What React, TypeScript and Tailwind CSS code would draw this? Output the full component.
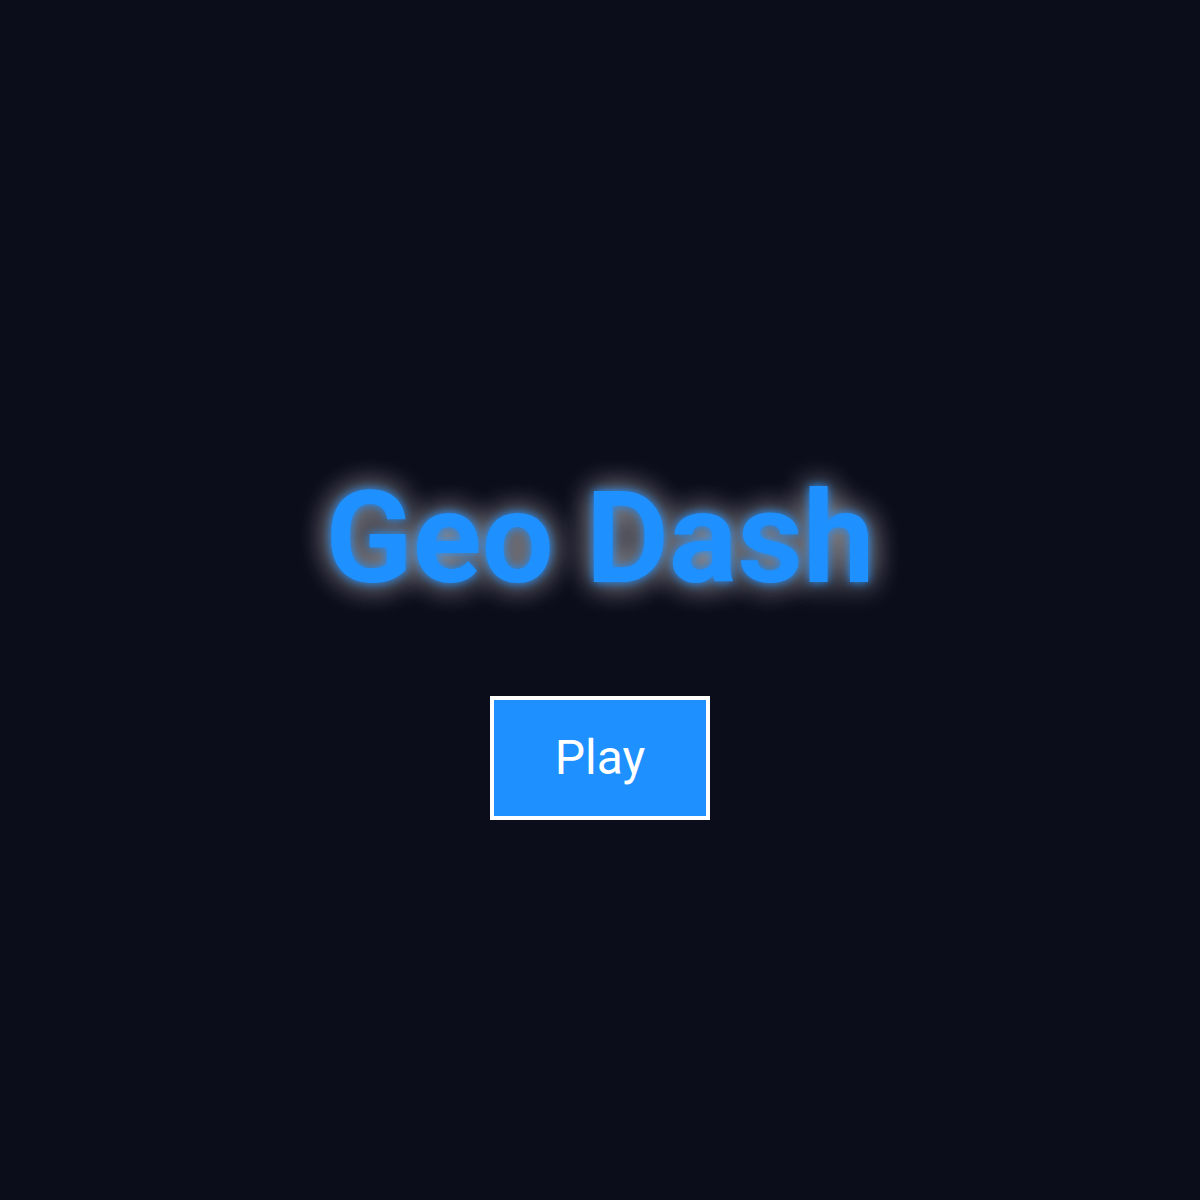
export default function App() {
  return (
    <div className="min-h-screen w-full bg-[#0c0d1b] flex flex-col items-center justify-center pt-[94px] font-['Roboto','Liberation_Sans',sans-serif]">
      <h1 className="text-[128px] leading-none font-bold text-[#1e90ff] [text-shadow:0_0_10px_#1e90ff,0_0_32px_rgba(255,255,255,0.6),0_0_32px_rgba(255,255,255,0.3)]">
        Geo Dash
      </h1>
      <button className="mt-[94px] w-[220px] h-[124px] border-4 border-white bg-[#1e90ff] text-white text-[48px] leading-none">
        Play
      </button>
    </div>
  );
}
